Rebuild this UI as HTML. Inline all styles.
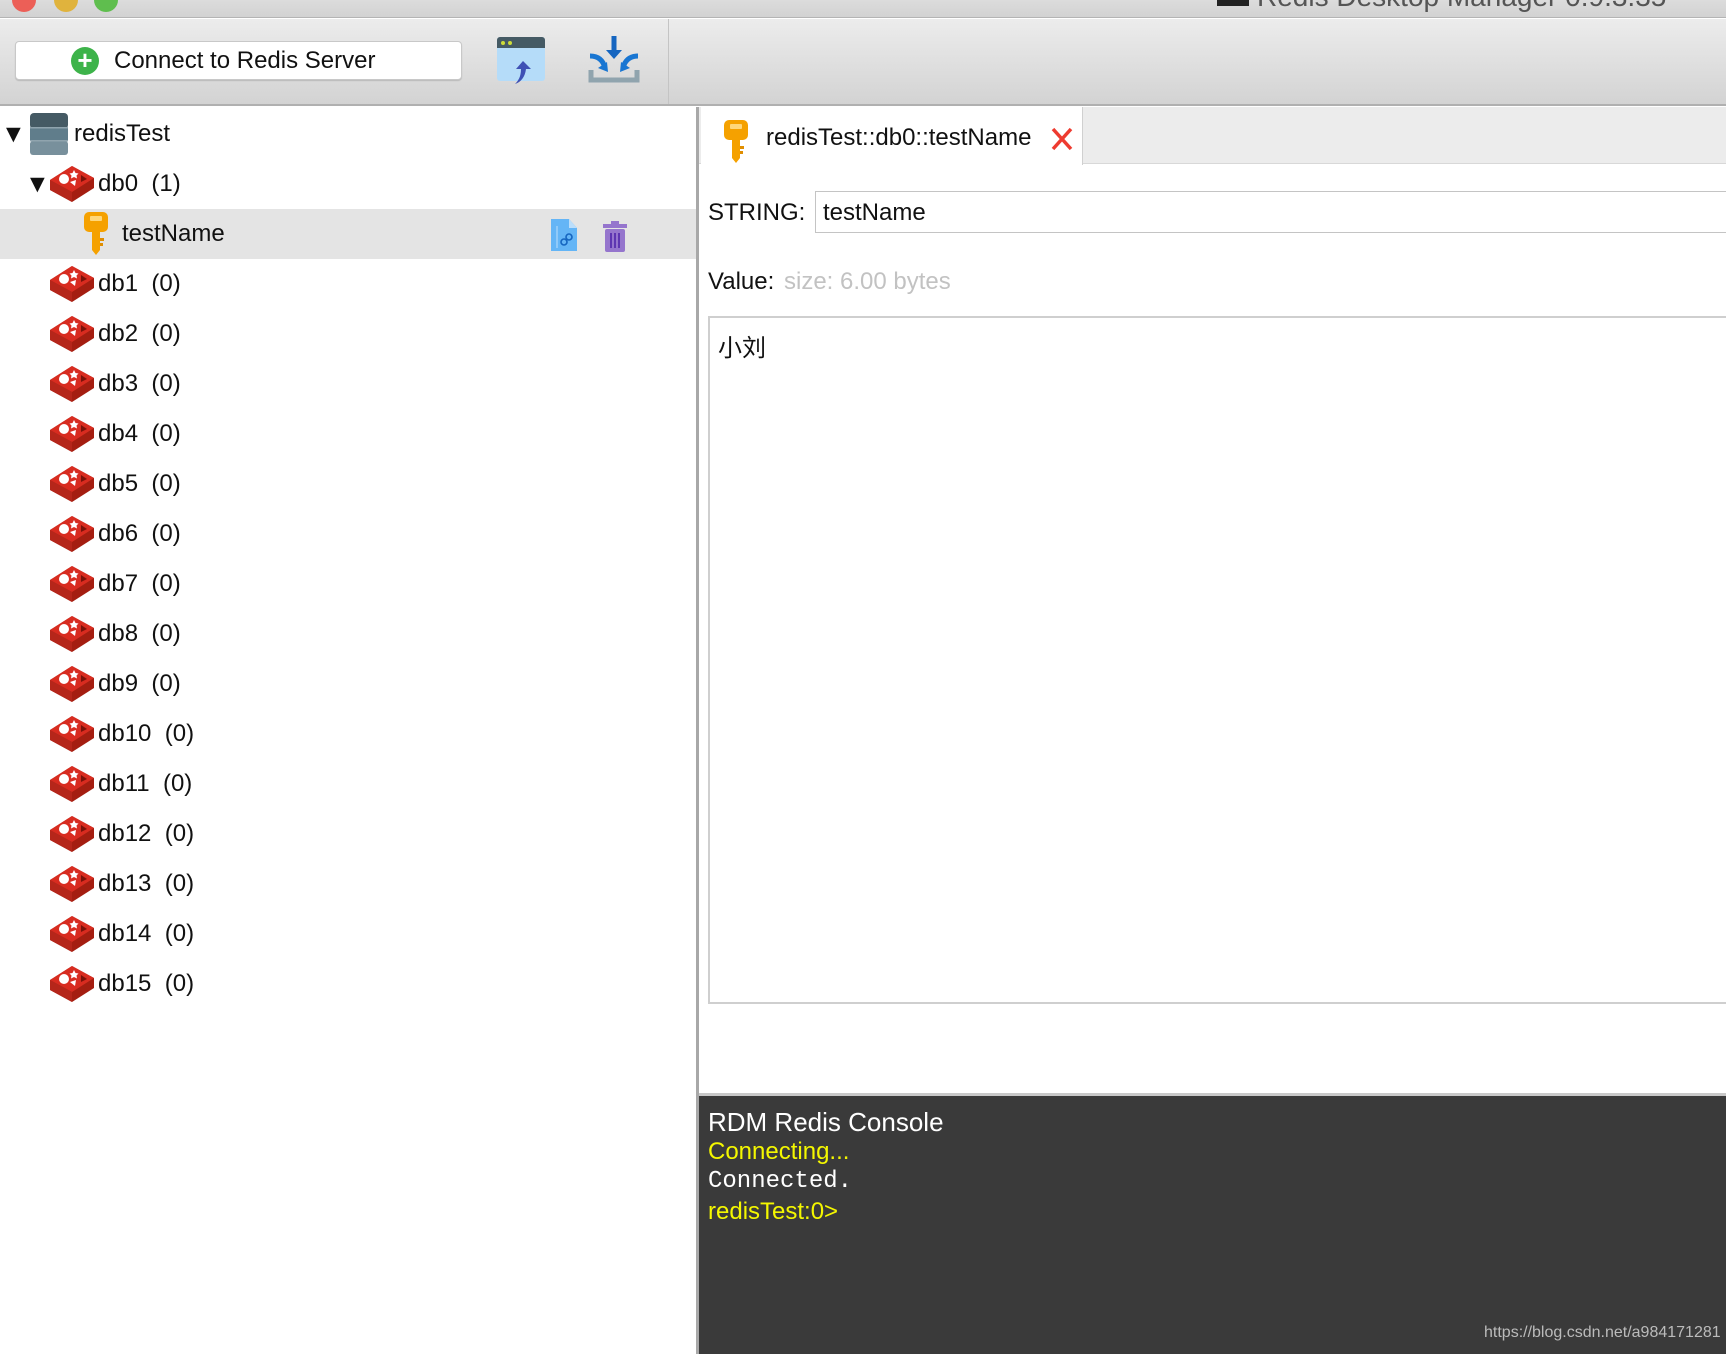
<!DOCTYPE html>
<html><head><meta charset="utf-8"><style>
*{margin:0;padding:0;box-sizing:border-box}
body{width:1726px;height:1354px;overflow:hidden;background:#fff;font-family:"Liberation Sans","Noto Sans CJK SC",sans-serif;position:relative;color:#111}
.a{position:absolute}
.title{left:0;top:0;width:1726px;height:18px;background:linear-gradient(#dcdcdc,#d2d2d2);border-bottom:1px solid #b4b4b4;overflow:hidden}
.tb{left:0;top:19px;width:1726px;height:87px;background:linear-gradient(#ececec,#d3d3d3);border-bottom:2px solid #b0b0b0}
.btn{left:15px;top:41px;width:447px;height:39px;background:#fff;border:1px solid #c8c8c8;border-radius:4px;box-shadow:0 1px 1px rgba(0,0,0,.15);font-size:24px;line-height:37px}
.row{left:0;height:50px;width:696px;font-size:24px;line-height:50px}
.row span{position:absolute}
.cube{position:absolute;left:48px;width:48px;height:40px}
</style></head><body>
<svg width="0" height="0" style="position:absolute"><defs>
<g id="cube">
<path d="M2 16 L24 2 L46 14 L46 24 L24 38 L2 26 Z" fill="#a41e11"/>
<path d="M2 16 L24 2 L46 14 L24 28 Z" fill="#d82c20"/>
<path d="M2 16 L24 28 L24 38 L2 26 Z" fill="#b5261a"/>
<circle cx="16" cy="15" r="5" fill="#fff"/>
<path d="M26 6 l1.5 3 3 .5 -2 2 .5 3 -3 -1.5 -3 1.5 .5 -3 -2 -2 3 -.5z" fill="#fff"/>
<path d="M22 18 l6 -2 -1 6z" fill="#fff"/>
<path d="M33 11 l6 4 -6 3z" fill="#7a1209"/>
</g>
<g id="key">
<rect x="2" y="0" width="24" height="20" rx="5" fill="#f5a100"/>
<rect x="8" y="4" width="12" height="5" rx="1" fill="#ffd77a"/>
<path d="M10 18 h8 v20 l-4 5 -4 -5z" fill="#f5a100"/>
<path d="M18 26 h4 v3 h-4z M18 31 h3 v3 h-3z" fill="#e08e00"/>
</g>
</defs></svg>

<div class="a title"><span class="a" style="left:1257px;top:-19px;font-size:28px;color:#555">Redis Desktop Manager 0.9.3.35</span>
<div class="a" style="left:12px;top:-12px;width:24px;height:24px;border-radius:50%;background:#ec5f57"></div>
<div class="a" style="left:54px;top:-12px;width:24px;height:24px;border-radius:50%;background:#e0b33d"></div>
<div class="a" style="left:94px;top:-12px;width:24px;height:24px;border-radius:50%;background:#5fbe4e"></div>
<div class="a" style="left:1217px;top:0;width:32px;height:6px;background:#222"></div>
</div>
<div class="a tb">
<div class="a" style="left:668px;top:0;width:1px;height:85px;background:#c4c4c4"></div>
</div>
<div class="a btn"><div class="a" style="left:55px;top:5px;width:28px;height:28px;border-radius:50%;background:#3db34a;color:#fff;font-size:26px;line-height:27px;text-align:center;font-weight:bold">+</div><span class="a" style="left:98px;top:0">Connect to Redis Server</span></div>
<svg class="a" style="left:496px;top:35px" width="52" height="52"><rect x="1" y="2" width="48" height="44" rx="3" fill="#b5dcf9"/><path d="M1 5 a3 3 0 0 1 3 -3 h42 a3 3 0 0 1 3 3 v8 h-48z" fill="#455a64"/><circle cx="7" cy="8" r="2" fill="#cddc39"/><circle cx="14" cy="8" r="2" fill="#cddc39"/><path d="M27 26 l-7 8 h5 c0 8 -3 12 -6 15 c6 -2 10 -7 11 -15 h5z" fill="#3f51b5"/></svg>
<svg class="a" style="left:586px;top:34px" width="56" height="56"><path d="M5 36 v10 h46 v-10" stroke="#90a4ae" stroke-width="5" fill="none"/><path d="M28 2 v18" stroke="#1565c0" stroke-width="5"/><path d="M20 16 l8 9 8 -9z" fill="#1565c0"/><path d="M4 22 c8 0 13 4 15 12" stroke="#1976d2" stroke-width="5" fill="none"/><path d="M12 34 l10 4 -1 -10z" fill="#1976d2"/><path d="M52 22 c-8 0 -13 4 -15 12" stroke="#1976d2" stroke-width="5" fill="none"/><path d="M44 34 l-10 4 1 -10z" fill="#1976d2"/></svg>

<div class="a" style="left:696px;top:107px;width:3px;height:1247px;background:#a8a8a8"></div>
<div class="a row" style="top:109px"><span style="left:1px;font-size:25px">▼</span>
<svg class="a" style="left:30px;top:4px" width="38" height="42"><rect x="0" y="0" width="38" height="16" rx="4" fill="#455a64"/><rect x="0" y="14" width="38" height="13" fill="#607d8b"/><rect x="0" y="28" width="38" height="14" rx="3" fill="#78909c"/><rect x="0" y="14" width="38" height="1.5" fill="#90a4ae"/><rect x="0" y="27" width="38" height="1.5" fill="#90a4ae"/></svg>
<span style="left:74px">redisTest</span></div>
<div class="a row" style="top:159px"><span style="left:25px;font-size:25px">▼</span><svg class="cube" style="top:5px" viewBox="0 0 48 40"><use href="#cube"/></svg><span style="left:98px">db0&nbsp;&nbsp;(1)</span></div>
<div class="a row" style="top:209px;background:#e4e4e4"><svg class="a" style="left:82px;top:3px" width="30" height="44"><use href="#key"/></svg><span style="left:122px">testName</span>
<svg class="a" style="left:550px;top:9px" width="28" height="34"><path d="M1 1 h18 l8 9 v23 h-26z" fill="#64b5f6"/><path d="M19 1 v9 h8z" fill="#bbdefb"/><path d="M7 8 v22" stroke="#90caf9" stroke-width="2"/><circle cx="14" cy="24" r="3" stroke="#1565c0" stroke-width="1.6" fill="none"/><circle cx="19" cy="19" r="3" stroke="#1565c0" stroke-width="1.6" fill="none"/></svg>
<svg class="a" style="left:602px;top:12px" width="26" height="32"><rect x="1" y="3" width="24" height="4" fill="#9575cd"/><rect x="9" y="0" width="8" height="4" fill="#9575cd"/><rect x="3" y="8" width="20" height="23" rx="2" fill="#9575cd"/><path d="M9 12 v15 M13 12 v15 M17 12 v15" stroke="#5e35b1" stroke-width="2"/></svg>
</div>
<div class="a row" style="top:259px"><svg class="cube" style="top:5px" viewBox="0 0 48 40"><use href="#cube"/></svg><span style="left:98px">db1&nbsp;&nbsp;(0)</span></div>
<div class="a row" style="top:309px"><svg class="cube" style="top:5px" viewBox="0 0 48 40"><use href="#cube"/></svg><span style="left:98px">db2&nbsp;&nbsp;(0)</span></div>
<div class="a row" style="top:359px"><svg class="cube" style="top:5px" viewBox="0 0 48 40"><use href="#cube"/></svg><span style="left:98px">db3&nbsp;&nbsp;(0)</span></div>
<div class="a row" style="top:409px"><svg class="cube" style="top:5px" viewBox="0 0 48 40"><use href="#cube"/></svg><span style="left:98px">db4&nbsp;&nbsp;(0)</span></div>
<div class="a row" style="top:459px"><svg class="cube" style="top:5px" viewBox="0 0 48 40"><use href="#cube"/></svg><span style="left:98px">db5&nbsp;&nbsp;(0)</span></div>
<div class="a row" style="top:509px"><svg class="cube" style="top:5px" viewBox="0 0 48 40"><use href="#cube"/></svg><span style="left:98px">db6&nbsp;&nbsp;(0)</span></div>
<div class="a row" style="top:559px"><svg class="cube" style="top:5px" viewBox="0 0 48 40"><use href="#cube"/></svg><span style="left:98px">db7&nbsp;&nbsp;(0)</span></div>
<div class="a row" style="top:609px"><svg class="cube" style="top:5px" viewBox="0 0 48 40"><use href="#cube"/></svg><span style="left:98px">db8&nbsp;&nbsp;(0)</span></div>
<div class="a row" style="top:659px"><svg class="cube" style="top:5px" viewBox="0 0 48 40"><use href="#cube"/></svg><span style="left:98px">db9&nbsp;&nbsp;(0)</span></div>
<div class="a row" style="top:709px"><svg class="cube" style="top:5px" viewBox="0 0 48 40"><use href="#cube"/></svg><span style="left:98px">db10&nbsp;&nbsp;(0)</span></div>
<div class="a row" style="top:759px"><svg class="cube" style="top:5px" viewBox="0 0 48 40"><use href="#cube"/></svg><span style="left:98px">db11&nbsp;&nbsp;(0)</span></div>
<div class="a row" style="top:809px"><svg class="cube" style="top:5px" viewBox="0 0 48 40"><use href="#cube"/></svg><span style="left:98px">db12&nbsp;&nbsp;(0)</span></div>
<div class="a row" style="top:859px"><svg class="cube" style="top:5px" viewBox="0 0 48 40"><use href="#cube"/></svg><span style="left:98px">db13&nbsp;&nbsp;(0)</span></div>
<div class="a row" style="top:909px"><svg class="cube" style="top:5px" viewBox="0 0 48 40"><use href="#cube"/></svg><span style="left:98px">db14&nbsp;&nbsp;(0)</span></div>
<div class="a row" style="top:959px"><svg class="cube" style="top:5px" viewBox="0 0 48 40"><use href="#cube"/></svg><span style="left:98px">db15&nbsp;&nbsp;(0)</span></div>

<div class="a" style="left:699px;top:107px;width:1027px;height:57px;background:#ececec;border-bottom:1px solid #d8d8d8"></div>
<div class="a" style="left:701px;top:107px;width:382px;height:58px;background:#fff;border-right:1px solid #d0d0d0"></div>
<svg class="a" style="left:722px;top:120px" width="30" height="44"><use href="#key"/></svg>
<span class="a" style="left:766px;top:124px;font-size:24px">redisTest::db0::testName</span>
<svg class="a" style="left:1050px;top:126px" width="24" height="26"><path d="M3 3 L21 23 M21 3 L3 23" stroke="#ee3b30" stroke-width="3.5"/></svg>
<span class="a" style="left:708px;top:199px;font-size:24px">STRING:</span>
<div class="a" style="left:815px;top:191px;width:920px;height:42px;border:1px solid #c4c4c4;font-size:24px;padding:10px 7px;line-height:22px;font-weight:500">testName</div>
<span class="a" style="left:708px;top:268px;font-size:24px">Value:</span>
<span class="a" style="left:784px;top:268px;font-size:24px;color:#c2c2c2">size: 6.00 bytes</span>
<div class="a" style="left:708px;top:316px;width:1030px;height:688px;border:2px solid #cfcfcf"></div>
<span class="a" style="left:718px;top:328px;font-size:24px">小刘</span>

<div class="a" style="left:699px;top:1093px;width:1027px;height:3px;background:#c8c8c8"></div>
<div class="a" style="left:699px;top:1096px;width:1027px;height:258px;background:#3a3a3a"></div>
<span class="a" style="left:708px;top:1107px;font-size:26px;color:#fff">RDM Redis Console</span>
<span class="a" style="left:708px;top:1138px;font-size:24px;color:#f4f700">Connecting...</span>
<span class="a" style="left:708px;top:1168px;font-size:24px;color:#fff;font-family:'Liberation Mono',monospace">Connected.</span>
<span class="a" style="left:708px;top:1198px;font-size:24px;color:#f4f700">redisTest:0&gt;</span>
<span class="a" style="left:1484px;top:1324px;font-size:16px;color:#bbb">https://blog.csdn.net/a984171281</span>
</body></html>
